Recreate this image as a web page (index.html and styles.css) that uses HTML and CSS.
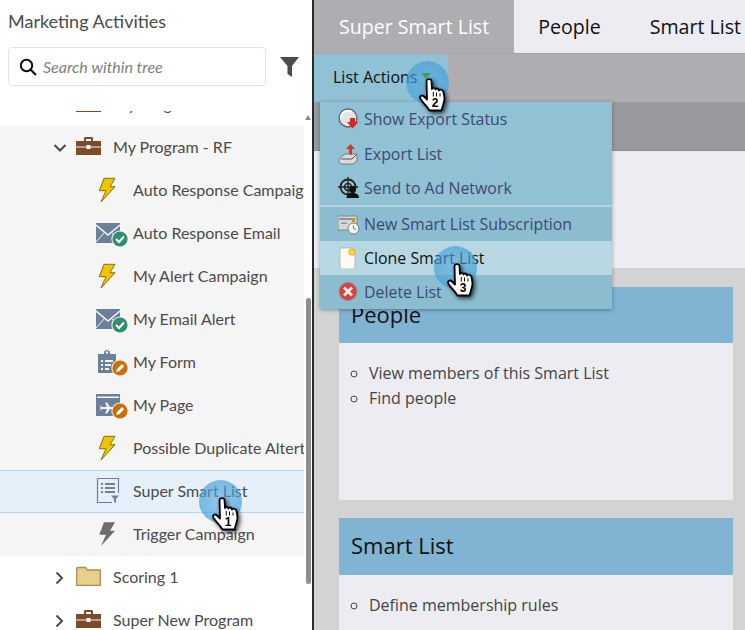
FILE: index.html
```html
<!DOCTYPE html>
<html lang="en">
<head>
<meta charset="utf-8">
<title>Marketing Activities</title>
<link rel="stylesheet" href="styles.css">
</head>
<body>
<svg class="defs" width="0" height="0" aria-hidden="true">
  <defs>
    <symbol id="bolt" viewBox="0 0 37 43"><path d="M8 9.300H19L14 17.700H19L5 33 10 21.700H3.300Z" fill="#eec400" stroke="#86700c" stroke-width="1"/></symbol>
    <symbol id="bolt-gray" viewBox="0 0 37 43"><path d="M8 9.300H19L14 17.700H19L5 33 10 21.700H3.300Z" fill="#6e6e6e"/></symbol>
    <symbol id="check" viewBox="0 0 37 43"><circle cx="24" cy="27" r="8.600" fill="#f5f5f5"/><circle cx="24" cy="27" r="7.600" fill="#2f8f6c"/><path d="M20 27l3 3 5-5.500" fill="none" stroke="#fff" stroke-width="2"/></symbol>
    <symbol id="pencil" viewBox="0 0 37 43"><circle cx="24" cy="27" r="8.600" fill="#f5f5f5"/><circle cx="24" cy="27" r="7.600" fill="#c96f00"/><path d="M20 31l1-3 5-5 2.200 2.200-5 5z" fill="#fff"/></symbol>
    <symbol id="email" viewBox="0 0 37 43"><path d="M0 11H24V31H0Z" fill="#6c809b"/><path d="M0 13L12 23 24 13" fill="none" stroke="#f5f5f5" stroke-width="1.600"/><path d="M0 30L8 21M24 30L16 21" stroke="#f5f5f5" stroke-width="1"/></symbol>
    <symbol id="form" viewBox="0 0 37 43"><path d="M2 13H8V11.500C8 8 14 8 14 11.500V13H20V32H2Z" fill="#6c809b"/><path d="M5 19h2v2H5zM9 19h8v2H9zM5 23h2v2H5zM9 23h6v2H9zM5 27h2v2H5zM9 27h4v2H9z" fill="#f5f5f5"/><circle cx="11" cy="11.500" r="1.200" fill="#f5f5f5"/></symbol>
    <symbol id="page" viewBox="0 0 37 43"><path d="M0 10H24V32H0Z" fill="#6c809b"/><path d="M1 12.500H23V14H1Z" fill="#f5f5f5"/><path d="M6 23H11L9 18.500H11L14 23H17L18 24 17 25H14L11 29.500H9L11 25H6L4.500 27V21Z" fill="#f5f5f5"/></symbol>
    <symbol id="smart" viewBox="0 0 37 43"><path d="M1.500 8.500H22.500V23M16 32.500H1.500V8.500" fill="none" stroke="#6c809b" stroke-width="1.200"/><path d="M5 13h2v2H5zM9 13h10v2H9zM5 17h2v2H5zM9 17h10v2H9zM5 21h2v2H5zM9 21h10v2H9z" fill="#6c809b"/><path d="M15 25.500H23L20 29V33L18 32V29Z" fill="#6c809b"/></symbol>
    <symbol id="folder" viewBox="0 0 37 43"><path d="M.7 12.500C.7 11.700 1 11.500 2 11.500H9C10 11.500 10.500 12 11 14H24.300V29.300H.7Z" fill="#e8cf8b" stroke="#a88f56" stroke-width="1.300"/></symbol>
    <symbol id="case" viewBox="0 0 37 43"><path d="M0 15H8V12.500C8 11.500 8.500 11 9.500 11H15.500C16.500 11 17 11.500 17 12.500V15H25V29H0Z" fill="#7b4b2a"/><path d="M10 13H15V15H10Z" fill="#f5f5f5"/><path d="M0 20.500H10.500V19H14.500V20.500H25V21.500H14.500V23H10.500V21.500H0Z" fill="#f5f5f5"/></symbol>
    <symbol id="hand" viewBox="0 0 28 36"><path d="M7.500 3C7.500 .5 12.500 .5 12.500 3L13 11C13.500 9.500 16 9.500 16.500 11.500 17 10 19.500 10 20 12.500 20.500 11 24 11.500 24.500 14L25.500 20C25.500 25 23.500 28 22.500 32.500H10.500C8 28 4 25 1.500 21 0 18 3 16.500 5 18.500L8 21.500Z" fill="#fff" stroke="#000" stroke-width="1.800" stroke-linejoin="round"/><path d="M14.300 14V18.500M17.500 14.500V18.500M21 15.500V18.500" stroke="#000" stroke-width="1"/></symbol>
  </defs>
</svg>

<div class="page">
  <aside class="side">
    <header class="side-head">
      <h1 class="side-title">Marketing Activities</h1>
      <div class="search-row">
        <div class="search">
          <svg class="search-icon" viewBox="0 0 18 18"><circle cx="7.500" cy="7.500" r="5.700" fill="none" stroke="#111" stroke-width="2"/><path d="M11.500 11.500L17 17" stroke="#111" stroke-width="2.200"/></svg>
          <span class="search-text">Search within tree</span>
        </div>
        <svg class="filter" viewBox="0 0 19 20"><path d="M0 0H19L12 9V20L7.500 17V9Z" fill="#4b4b4b"/></svg>
      </div>
    </header>
    <div class="tree">
      <div class="row top cut"><span class="chev"></span><svg class="ico"><use href="#case"/></svg><span class="lbl">My Program</span></div>
      <div class="row top open"><svg class="chev" viewBox="0 0 14 14"><path d="M1.500 4L7 9.500 12.500 4" fill="none" stroke="#4b4b4b" stroke-width="2"/></svg><svg class="ico"><use href="#case"/></svg><span class="lbl">My Program - RF</span></div>
      <div class="row child"><svg class="ico"><use href="#bolt"/></svg><span class="lbl">Auto Response Campaign</span></div>
      <div class="row child"><svg class="ico"><use href="#email"/><use href="#check"/></svg><span class="lbl">Auto Response Email</span></div>
      <div class="row child"><svg class="ico"><use href="#bolt"/></svg><span class="lbl">My Alert Campaign</span></div>
      <div class="row child"><svg class="ico"><use href="#email"/><use href="#check"/></svg><span class="lbl">My Email Alert</span></div>
      <div class="row child"><svg class="ico"><use href="#form"/><use href="#pencil"/></svg><span class="lbl">My Form</span></div>
      <div class="row child"><svg class="ico"><use href="#page"/><use href="#pencil"/></svg><span class="lbl">My Page</span></div>
      <div class="row child"><svg class="ico"><use href="#bolt"/></svg><span class="lbl">Possible Duplicate Altert</span></div>
      <div class="row child selected"><svg class="ico"><use href="#smart"/></svg><span class="lbl">Super Smart List</span></div>
      <div class="row child"><svg class="ico"><use href="#bolt-gray"/></svg><span class="lbl">Trigger Campaign</span></div>
      <div class="row top"><svg class="chev" viewBox="0 0 14 14"><path d="M3.500 1.500L9 7 3.500 12.500" fill="none" stroke="#4b4b4b" stroke-width="2"/></svg><svg class="ico"><use href="#folder"/></svg><span class="lbl">Scoring 1</span></div>
      <div class="row top"><svg class="chev" viewBox="0 0 14 14"><path d="M3.500 1.500L9 7 3.500 12.500" fill="none" stroke="#4b4b4b" stroke-width="2"/></svg><svg class="ico"><use href="#case"/></svg><span class="lbl">Super New Program</span></div>
    </div>
    <div class="scroll-arrow"></div>
    <div class="scroll-thumb"></div>
  </aside>

  <main class="main">
    <nav class="tabs">
      <span class="tab active">Super Smart List</span>
      <span class="tab">People</span>
      <span class="tab">Smart List</span>
    </nav>
    <div class="toolbar">
      <div class="actions">List Actions<span class="caret"></span></div>
    </div>
    <div class="subbar"></div>
    <div class="blank"></div>
    <div class="cards">
      <section class="card">
        <h2 class="card-head">People</h2>
        <ul class="card-list tall">
          <li>View members of this Smart List</li>
          <li>Find people</li>
        </ul>
      </section>
      <section class="card last">
        <h2 class="card-head second">Smart List</h2>
        <ul class="card-list">
          <li>Define membership rules</li>
        </ul>
      </section>
    </div>
  </main>

  <div class="menu">
    <div class="item">
      <svg class="mi" viewBox="0 0 22 22"><circle cx="10" cy="10" r="9" fill="#e4e4e4" stroke="#666" stroke-width="1.400"/><path d="M3 10A7 7 0 0 1 14 4" fill="none" stroke="#fff" stroke-width="2"/><path d="M12 10H17V14H20.500L14.500 20.500 9 14H12Z" fill="#d8232a"/></svg>
      <span>Show Export Status</span>
    </div>
    <div class="item">
      <svg class="mi" viewBox="0 0 22 22"><path d="M1 16L7 11H19V18L15 21H3L1 19Z" fill="#d9dadb" stroke="#666" stroke-width=".8"/><path d="M3 16H14L18 12" fill="none" stroke="#555"/><path d="M11 11V6H8L12.500 1 17 6H14V12Z" fill="#d9381e"/></svg>
      <span>Export List</span>
    </div>
    <div class="item">
      <svg class="mi" viewBox="0 0 22 22"><circle cx="10" cy="10" r="7.500" fill="none" stroke="#222" stroke-width="1.800"/><circle cx="10" cy="10" r="3.500" fill="none" stroke="#222" stroke-width="1.500"/><path d="M10 0V20M0 10H20" stroke="#222" stroke-width="1.300"/><circle cx="14.500" cy="12.500" r="3.500" fill="#111"/><path d="M8.500 21C8.500 17 11 16 14.500 16S21 17 21 21Z" fill="#111"/></svg>
      <span>Send to Ad Network</span>
    </div>
    <div class="sep"></div>
    <div class="item lower">
      <svg class="mi" viewBox="0 0 22 22"><path d="M0 3H19V17H0Z" fill="#d5d8d8" stroke="#777" stroke-width=".8"/><path d="M1.500 5H17.500V7H1.500ZM3 9.500H9V11H3Z" fill="#8e9496"/><path d="M14 5H17V9H14Z" fill="#b0a03c"/><circle cx="15.500" cy="15.500" r="5.500" fill="#f2f3f3" stroke="#777"/><path d="M15.500 12.500V15.500L18 16.500" fill="none" stroke="#777"/></svg>
      <span>New Smart List Subscription</span>
    </div>
    <div class="item lower hover">
      <svg class="mi" viewBox="0 0 22 22"><path d="M2 1H15L17 3V22H2Z" fill="#fbfbf4" stroke="#a9b0b3" stroke-width=".8"/><circle cx="14" cy="5" r="3.700" fill="#f2c230"/><circle cx="14" cy="5" r="1.500" fill="#fbe58a"/></svg>
      <span>Clone Smart List</span>
    </div>
    <div class="item lower">
      <svg class="mi" viewBox="0 0 22 22"><circle cx="10" cy="10.500" r="9" fill="#d9403c" stroke="#8d8f90" stroke-width="1.200"/><path d="M6 6.500L14 14.500M14 6.500L6 14.500" stroke="#f7e7e6" stroke-width="3"/></svg>
      <span>Delete List</span>
    </div>
  </div>

  <div class="pointer p1"><svg class="hand"><use href="#hand"/></svg><span class="num">1</span></div>
  <div class="pointer p2"><svg class="hand"><use href="#hand"/></svg><span class="num">2</span></div>
  <div class="pointer p3"><svg class="hand"><use href="#hand"/></svg><span class="num">3</span></div>
</div>
</body>
</html>
```

FILE: styles.css
```css
* { box-sizing: border-box; }
html, body { margin: 0; padding: 0; }
body { width: 745px; height: 630px; overflow: hidden; background: #fff; font-family: "Open Sans", sans-serif; }
.defs { position: absolute; }
.page { position: relative; display: flex; width: 745px; height: 630px; overflow: hidden; }

.side { position: relative; flex: 0 0 312px; background: #fff; display: flex; flex-direction: column; overflow: hidden; font-family: "Lato", sans-serif; color: #4b4b4b; }
.side-head { flex: 0 0 111px; padding: 9px 0 0 8px; }
.side-title { margin: 0; font-size: 18px; font-weight: 400; line-height: 24px; color: #4b4b4b; }
.search-row { display: flex; align-items: center; margin-top: 14px; }
.search { width: 258px; height: 39px; display: flex; align-items: center; padding-left: 10px; background: #fff; border: 1px solid #e3e3e3; border-radius: 4px; }
.search-icon { width: 18px; height: 18px; margin-right: 6px; }
.search-text { font-size: 16px; font-style: italic; color: #808080; }
.filter { width: 19px; height: 20px; margin-left: 14px; }

.tree { width: 304px; flex: 1; overflow: hidden; }
.row { display: flex; align-items: center; height: 43px; background: #f5f5f5; white-space: nowrap; overflow: hidden; font-size: 16px; }
.row .ico { flex: 0 0 37px; width: 37px; height: 43px; }
.lbl { margin-bottom: 2px; }
.row.top { padding-left: 53px; background: #fff; }
.row.top.open { background: #f5f5f5; }
.row.cut { margin-top: -28px; }
.chev { flex: 0 0 14px; width: 14px; height: 14px; margin-right: 9px; }
span.chev { display: block; }
.row.child { padding-left: 96px; }
.row.selected { background: #e6f0fb; border-top: 1px solid #b8d5f0; border-bottom: 1px solid #b8d5f0; }

.scroll-arrow { position: absolute; left: 305px; top: 115px; width: 0; height: 0; border-left: 3px solid transparent; border-right: 3px solid transparent; border-bottom: 5px solid #8a8a8a; }
.scroll-thumb { position: absolute; left: 306px; top: 298px; width: 5px; height: 286px; border-radius: 3px; background: #8e8e8e; }

.main { flex: 1; min-width: 0; display: flex; flex-direction: column; border-left: 2px solid #2b2b2b; background: #d3d3d3; }
.tabs { display: flex; flex: 0 0 53px; background: #edecf2; overflow: hidden; }
.tab { padding: 0 25px 0 24px; font-size: 19.600px; line-height: 53px; color: #111; white-space: nowrap; }
.tab.active { flex: 0 0 200px; padding-left: 25px; background: #aeadb1; color: #fff; }
.toolbar { flex: 0 0 49px; background: #aeadb1; border-top: 1px solid #a5a4a8; }
.actions { width: 134px; height: 48px; padding: 11px 0 0 19px; background: #90c1d4; font-size: 16px; line-height: 24px; color: #111; white-space: nowrap; }
.caret { position: relative; z-index: 1; display: inline-block; margin-left: 4px; width: 0; height: 0; vertical-align: 4px; border-left: 5px solid transparent; border-right: 5px solid transparent; border-top: 6px solid #3f9e63; }
.subbar { flex: 0 0 49px; background: #9a999d; border-bottom: 1px solid #8f8e92; }
.blank { flex: 0 0 117px; background: #edecf2; }
.cards { flex: 1; min-height: 0; padding: 19px 12px 0 25px; display: flex; flex-direction: column; gap: 18px; }
.card { background: #edecf2; }
.card.last { flex: 1; }
.card-head { margin: 0; height: 56px; padding-left: 12px; background: #80b4d2; font-size: 22px; font-weight: 400; line-height: 55px; color: #111; }
.card-head.second { height: 57px; }
.card-list { margin: 0; padding: 18px 0 0 30px; list-style: circle; font-size: 16px; line-height: 24.700px; color: #444; }
.card-list.tall { height: 157px; }

.menu { position: absolute; left: 320px; top: 102px; width: 292px; background: #90c1d4; box-shadow: 0 1px 4px rgba(0, 0, 0, .35); }
.item { display: flex; align-items: center; height: 34.400px; padding-left: 18px; font-size: 15.900px; color: #3d4a70; white-space: nowrap; }
.item.lower { height: 34px; background: #8bbcd0; }
.item.hover { background: #b7d8e3; color: #111; }
.mi { flex: 0 0 22px; width: 22px; height: 22px; margin-right: 4px; }
.sep { height: 2px; background: #b4d4e0; }

.pointer { position: absolute; width: 43px; height: 43px; border-radius: 50%; background: radial-gradient(circle, rgba(80, 165, 220, .55) 0, rgba(70, 160, 215, .72) 85%, rgba(70, 160, 215, .4) 100%); }
.p1 { left: 199px; top: 480px; }
.p2 { left: 406px; top: 61px; }
.p3 { left: 434px; top: 246px; }
.hand { position: absolute; left: 13px; top: 17px; width: 28px; height: 36px; overflow: visible; filter: drop-shadow(2px 2px 2px rgba(0, 0, 0, .7)); }
.num { position: absolute; left: 25px; top: 35px; width: 8px; text-align: center; font-family: "Liberation Sans", sans-serif; font-size: 12px; font-weight: 700; line-height: 14px; color: #000; }
```
